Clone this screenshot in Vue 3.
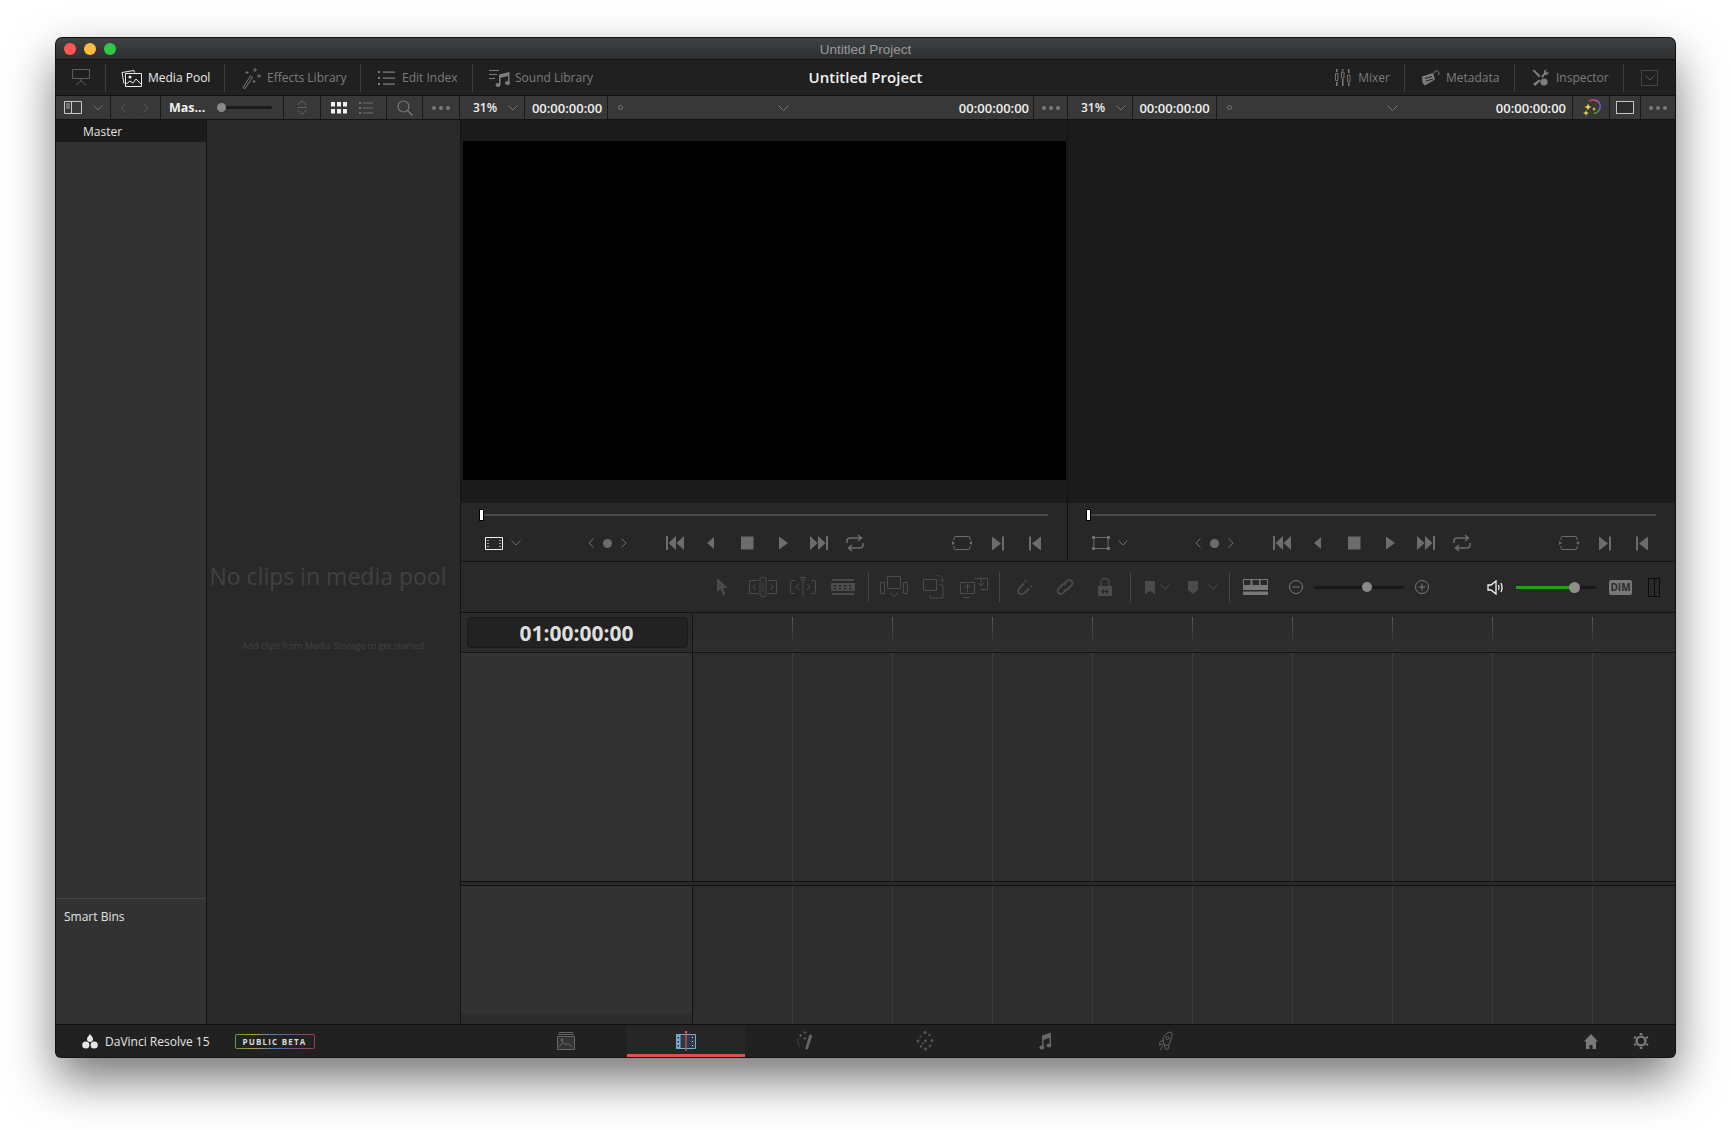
<template>
  <div class="page">
    <div class="window">
      <header class="titlebar">
        <div class="lights">
          <span class="light light--red"></span>
          <span class="light light--amber"></span>
          <span class="light light--green"></span>
        </div>
        <span class="titlebar__name">Untitled Project</span>
      </header>

      <div class="toolbar">
        <div class="toolbar__side">
          <div class="tool tool--monitor">
            <svg width="18" height="18" viewBox="0 0 18 18" fill="none" stroke="currentColor">
              <path d="M.5 .5h17v9H.5z" />
              <path d="M9 9.500v3M4 16l5-4 5 4" />
            </svg>
          </div>
          <div class="tool tool--active tool--pool">
            <svg width="21" height="18" viewBox="0 0 21 18" fill="none" stroke="currentColor">
              <path d="M3 14.500 1 3.500l12-2 .5 2" />
              <path d="M4.500 4.500h16v13h-16z" />
              <circle cx="9" cy="8" r="1.500" fill="currentColor" stroke="none" />
              <path d="M5 15l4-3 3 2 3-4 5 5" />
            </svg>
            Media Pool
          </div>
          <div class="tool tool--effects">
            <svg width="22" height="22" viewBox="0 0 22 22" fill="none" stroke="currentColor">
              <path d="M2 20.500 9.500 9l2 1.300L4 21.500z" />
              <path d="M14 1v4M12 3h4M18 7v4M16 9h4M13 13v3M11.500 14.500h3M6 4v3M4.500 5.500h3" stroke-width=".9" />
            </svg>
            Effects Library
          </div>
          <div class="tool tool--index">
            <svg width="17" height="14" viewBox="0 0 17 14" fill="currentColor">
              <path d="M0 0h2v2H0zM0 6h2v2H0zM0 12h2v2H0zM5 .5h12v1.200H5zM5 6.500h12v1.200H5zM5 12.500h12v1.200H5z" />
            </svg>
            Edit Index
          </div>
          <div class="tool tool--sound">
            <svg width="22" height="18" viewBox="0 0 22 18" fill="currentColor">
              <path d="M0 1h10v1H0zM0 5h8v1H0zM0 9h6v1H0z" />
              <path d="M10 5.500 20.500 3v11h-1.400V7L11.500 8.800V16h-1.500z" />
              <ellipse cx="9" cy="16" rx="2.500" ry="2" />
              <ellipse cx="18.500" cy="14" rx="2.500" ry="2" />
            </svg>
            Sound Library
          </div>
        </div>
        <div class="toolbar__project">Untitled Project</div>
        <div class="toolbar__side toolbar__side--right">
          <div class="tool tool--mixer">
            <svg width="16" height="17" viewBox="0 0 16 17" fill="currentColor">
              <path d="M1 0h1.500v3H1zM1 13h1.500v4H1zM7 0h1.500v1.500H7zM7 10h1.500v7H7zM13 0h1.500v4H13zM13 14h1.500v3H13z" />
              <path d="M.5 4.500h2.500v7H.5zM6.500 3h2.500v6H6.500zM12.500 6h2.500v7h-2.500z" fill="none" stroke="currentColor" stroke-width=".9" />
            </svg>
            Mixer
          </div>
          <div class="tool tool--meta">
            <svg width="19" height="16" viewBox="0 0 19 16" fill="currentColor">
              <path d="M1 6.500 12 3l2 6.500L4 15.500 1.500 13z" />
              <path d="M13 3.500c0-2 2-3.200 3.500-2.600s2.200 2.600.7 4.400" fill="none" stroke="currentColor" />
              <path d="M4 8.500l7-2M5 11l7-2" stroke="#202020" />
            </svg>
            Metadata
          </div>
          <div class="tool tool--inspector">
            <svg width="17" height="17" viewBox="0 0 17 17" fill="currentColor">
              <path d="M.5 1.500 2 .5l6.500 6.200-1.500 1.800zM7 10.500l1.500 1.500-5.500 5-2-2z" />
              <path d="M9 7.500 12 4c-.6-1.800.6-3.600 3-3.500l-1.500 2 1 1.300 2-1c.3 2.200-1.500 3.700-3.500 3L10.500 9z" />
              <circle cx="12" cy="13" r="3.600" />
            </svg>
            Inspector
          </div>
          <div class="tool tool--expand">
            <span class="expand-box">
              <svg width="10" height="6" viewBox="0 0 10 6" fill="none" stroke="currentColor"><path d="m.5 .5 4.500 4.500 4.500-4.500" /></svg>
            </span>
          </div>
        </div>
      </div>

      <div class="subbar">
        <div class="seg seg--panel">
          <svg class="is-bright" width="18" height="13" viewBox="0 0 18 13" fill="none" stroke="currentColor">
            <path d="M.5 .5h17v12H.5zM7.500 .5v12" />
            <path d="M2 3h4M2 5h4M2 7h4" stroke-width=".8" />
          </svg>
          <svg width="10" height="6" viewBox="0 0 10 6" fill="none" stroke="currentColor"><path d="m.5 .5 4.500 4.500 4.500-4.500" /></svg>
        </div>
        <div class="seg seg--nav">
          <svg width="6" height="10" viewBox="0 0 6 10" fill="none" stroke="currentColor"><path d="M5.500 .5 1 5l4.500 4.500" /></svg>
          <svg width="6" height="10" viewBox="0 0 6 10" fill="none" stroke="currentColor"><path d="M.5 .5 5 5 .5 9.500" /></svg>
        </div>
        <div class="seg seg--bin">
          <b>Mas...</b>
          <span class="mini-slider"><i></i></span>
        </div>
        <div class="seg seg--sort">
          <svg width="10" height="15" viewBox="0 0 10 15" fill="none" stroke="currentColor">
            <path d="m.5 5 4.500-4.500L9.500 5M.5 7.500h9M.5 10 5 14.500 9.500 10" />
          </svg>
        </div>
        <div class="seg seg--view">
          <svg class="is-white" width="16" height="12" viewBox="0 0 16 12" fill="currentColor">
            <path d="M0 0h4v4.500H0zM6 0h4v4.500H6zM12 0h4v4.500h-4zM0 7h4v4.500H0zM6 7h4v4.500H6zM12 7h4v4.500h-4z" />
          </svg>
          <svg width="14" height="12" viewBox="0 0 14 12" fill="currentColor">
            <path d="M0 0h2v2H0zM0 5h2v2H0zM0 10h2v2H0zM4 .5h10v1H4zM4 5.500h10v1H4zM4 10.500h10v1H4z" />
          </svg>
        </div>
        <div class="seg seg--search">
          <svg width="16" height="16" viewBox="0 0 16 16" fill="none" stroke="currentColor" stroke-width="1.200">
            <circle cx="6.500" cy="6.500" r="5.500" />
            <path d="m10.500 10.500 5 5" />
          </svg>
        </div>
        <div class="seg seg--more"><i></i><i></i><i></i></div>

        <div class="seg seg--zoom"><span>31%</span>
          <svg width="10" height="6" viewBox="0 0 10 6" fill="none" stroke="currentColor"><path d="m.5 .5 4.500 4.500 4.500-4.500" /></svg>
        </div>
        <div class="seg seg--tc seg--tc-a">00:00:00:00</div>
        <div class="seg seg--clip">
          <span class="clip-dot"></span>
          <svg class="clip-chev" width="11" height="6" viewBox="0 0 11 6" fill="none" stroke="currentColor"><path d="m.5 .5 5 5 5-5" /></svg>
          <span class="clip-tc">00:00:00:00</span>
        </div>
        <div class="seg seg--more seg--more-b"><i></i><i></i><i></i></div>

        <div class="seg seg--zoom seg--zoom-b"><span>31%</span>
          <svg width="10" height="6" viewBox="0 0 10 6" fill="none" stroke="currentColor"><path d="m.5 .5 4.500 4.500 4.500-4.500" /></svg>
        </div>
        <div class="seg seg--tc seg--tc-b">00:00:00:00</div>
        <div class="seg seg--clip seg--clip-b">
          <span class="clip-dot"></span>
          <svg class="clip-chev" width="11" height="6" viewBox="0 0 11 6" fill="none" stroke="currentColor"><path d="m.5 .5 5 5 5-5" /></svg>
          <span class="clip-tc">00:00:00:00</span>
        </div>
        <div class="seg seg--color">
          <svg width="19" height="17" viewBox="0 0 19 17" fill="none" stroke-width="1.400">
            <path d="M7 2.200A7 7 0 0 1 12 1" stroke="#d9503c" />
            <path d="M12 1a7 7 0 0 1 5 2.500" stroke="#c44bc4" />
            <path d="M17 3.500a7 7 0 0 1 .8 6" stroke="#7a5be0" />
            <path d="M17.800 9.500a7 7 0 0 1-3 4" stroke="#3f9a55" />
            <path d="M14.800 13.500a7 7 0 0 1-3 1" stroke="#5ab04a" />
            <path d="M6 4.500 7 7l2.500 1L7 9l-1 2.500L5 9 2.500 8 5 7zM12 8l.6 1.500 1.400.5-1.400.5L12 12l-.6-1.500L10 10l1.400-.5zM4 11l.8 2.200L7 14l-2.200.8L4 17l-.8-2.200L1 14l2.200-.8z" fill="#f3dc4a" stroke="none" />
          </svg>
        </div>
        <div class="seg seg--safe"><span class="safe-box"></span></div>
        <div class="seg seg--more seg--last"><i></i><i></i><i></i></div>
      </div>

      <div class="main">
        <aside class="bins">
          <div class="bins__master">Master</div>
          <div class="bins__fill"></div>
          <div class="bins__smart">Smart Bins</div>
        </aside>

        <section class="pool">
          <p class="pool__empty">No clips in media pool</p>
          <p class="pool__hint">Add clips from Media Storage to get started</p>
        </section>

        <section class="edit">
          <div class="viewers">
            <div v-for="viewer in viewers" :key="viewer.id" class="viewer">
              <div class="viewer__screen">
                <div v-if="viewer.black" class="viewer__black"></div>
              </div>
              <div class="viewer__controls">
                <div class="scrub"><span class="scrub__head"></span></div>
                <div class="transport">
                  <div class="transport__view">
                    <svg v-if="viewer.black" class="is-white" width="18" height="13" viewBox="0 0 18 13" fill="none" stroke="currentColor">
                      <path d="M.5 .5h17v12H.5z" />
                      <path d="M3 3v1M3 6v1M3 9v1M15 3v1M15 6v1M15 9v1" stroke-width="1.200" />
                    </svg>
                    <svg v-else width="18" height="14" viewBox="0 0 18 14" fill="currentColor">
                      <path d="M2 1.500h14v11H2z" fill="none" stroke="currentColor" />
                      <path d="M0 0h3v3H0zM15 0h3v3h-3zM0 11h3v3H0zM15 11h3v3h-3z" />
                    </svg>
                    <svg width="10" height="6" viewBox="0 0 10 6" fill="none" stroke="currentColor"><path d="m.5 .5 4.500 4.500 4.500-4.500" /></svg>
                  </div>
                  <div class="transport__nav">
                    <svg width="6" height="10" viewBox="0 0 6 10" fill="none" stroke="currentColor"><path d="M5.500 .5 1 5l4.500 4.500" /></svg>
                    <span class="nav-dot"></span>
                    <svg width="6" height="10" viewBox="0 0 6 10" fill="none" stroke="currentColor"><path d="M.5 .5 5 5 .5 9.500" /></svg>
                  </div>
                  <div class="transport__play">
                    <span v-for="btn in playButtons" :key="btn" class="transport__btn">
                      <svg width="20" height="16" viewBox="0 0 20 16" fill="currentColor"><path :d="btn" /></svg>
                    </span>
                    <span class="transport__btn">
                      <svg width="18" height="18" viewBox="0 0 18 18" fill="none" stroke="currentColor" stroke-width="1.500">
                        <path d="M1 9V7q0-3 3-3h11M12 1l3.500 3L12 7M17 9v2q0 3-3 3H3M6 17l-3.500-3L6 11" />
                      </svg>
                    </span>
                  </div>
                  <div class="transport__marks">
                    <span class="transport__btn">
                      <svg width="20" height="16" viewBox="0 0 20 16" fill="none" stroke="currentColor">
                        <path d="M2 5V3q0-1.500 1.500-1.500h13Q18 1.500 18 3v2M2 11v2q0 1.500 1.500 1.500h13q1.500 0 1.500-1.500v-2" />
                        <path d="M0 6l3 2-3 2zM20 6l-3 2 3 2z" fill="currentColor" stroke="none" />
                      </svg>
                    </span>
                    <span class="transport__btn">
                      <svg width="13" height="15" viewBox="0 0 13 15" fill="currentColor"><path d="M0 .5 9 7.500 0 14.500zM10 .5h2v14h-2z" /></svg>
                    </span>
                    <span class="transport__btn">
                      <svg width="13" height="15" viewBox="0 0 13 15" fill="currentColor"><path d="M13 .5 4 7.500l9 7zM1 .5h2v14H1z" /></svg>
                    </span>
                  </div>
                </div>
              </div>
            </div>
          </div>

          <div class="tl-tools">
            <div class="tl-group tl-group--first">
              <span class="tl-btn">
                <svg width="14" height="18" viewBox="0 0 14 18" fill="currentColor"><path d="M1 0v14l3.500-3 2.500 6 2.500-1-2.500-6H12z" /></svg>
              </span>
              <span class="tl-btn">
                <svg width="28" height="20" viewBox="0 0 28 20" fill="none" stroke="currentColor">
                  <path d="M9 3.500H.5v13H9M19 3.500h8.500v13H19" />
                  <rect x="11" y=".5" width="6" height="19" rx="1.500" />
                  <path d="M6.500 7 4 10l2.500 3M21.500 7 24 10l-2.500 3M14 5v10" />
                </svg>
              </span>
              <span class="tl-btn">
                <svg width="26" height="20" viewBox="0 0 26 20" fill="none" stroke="currentColor">
                  <path d="M5 3.500H2q-1.500 0-1.500 1.500v10q0 1.500 1.500 1.500h3M21 3.500h3q1.500 0 1.500 1.500v10q0 1.500-1.500 1.500h-3M13 3v17" />
                  <path d="M10.500 .5h5L13 4zM9 7l-3 3 3 3M17 7l3 3-3 3" />
                </svg>
              </span>
              <span class="tl-btn">
                <svg width="24" height="16" viewBox="0 0 24 16" fill="currentColor">
                  <path d="M1 0h22v2H1zM1 14h22v2H1z" />
                  <path fill-rule="evenodd" d="M0 4h24v8H0zm3 2v1.500h2V6zm5 0v1.500h2V6zm5 0v1.500h2V6zm5 0v1.500h2V6zM3 9v1.500h2V9zm5 0v1.500h2V9zm5 0v1.500h2V9zm5 0v1.500h2V9z" />
                </svg>
              </span>
            </div>
            <span class="tl-sep"></span>
            <div class="tl-group">
              <span class="tl-btn">
                <svg width="28" height="22" viewBox="0 0 28 22" fill="none" stroke="currentColor">
                  <path d="M7.500 .5h13v12h-13zM.5 6.500h4v11h-4zM23.500 6.500h4v11h-4zM10 17l4 3.500 4-3.500" />
                </svg>
              </span>
              <span class="tl-btn">
                <svg width="22" height="24" viewBox="0 0 22 24" fill="none" stroke="currentColor">
                  <path d="M.5 4.500h13v11H.5zM7 19.500v3.500h13v-13h-4M14 .5c4 0 5.500 2 5.500 5.500M17 4.500 19.500 7 22 4.500" />
                </svg>
              </span>
              <span class="tl-btn">
                <svg width="28" height="22" viewBox="0 0 28 22" fill="none" stroke="currentColor">
                  <path d="M.5 6.500h14v11H.5zM14.500 2.500h13v11h-7M3 21.500h7M7.500 16V9M4.500 12l3-3.500 3 3.500M21 .5v9M18 7l3 3 3-3" />
                </svg>
              </span>
            </div>
            <span class="tl-sep"></span>
            <div class="tl-group">
              <span class="tl-btn">
                <svg width="18" height="18" viewBox="0 0 18 18" fill="none" stroke="currentColor" stroke-width="1.900">
                  <path d="M8 5.500 3.500 10q-2.500 3-.5 5.200T8.500 15l4.500-4.500" />
                  <path d="M10.200 2.200 9 3.400M16.200 8 15 9.200" />
                </svg>
              </span>
              <span class="tl-btn">
                <svg width="18" height="18" viewBox="0 0 18 18" fill="none" stroke="currentColor" stroke-width="1.800">
                  <path d="M7.500 6.500 11 3q2.500-2 4.500 0t0 4.500L12 11q-2 1.500-3.500.5" />
                  <path d="M10.500 11.500 7 15q-2.500 2-4.500 0t0-4.500L6 7q2-1.500 3.500-.5" />
                </svg>
              </span>
              <span class="tl-btn">
                <svg width="16" height="19" viewBox="0 0 16 19" fill="currentColor">
                  <path d="M4 8V4.500a4 4 0 0 1 8 0V8" fill="none" stroke="currentColor" stroke-width="1.300" />
                  <path fill-rule="evenodd" d="M1 8h14v10H1zm6 3-3 2.500L7 16v-2h2v2l3-2.500L9 11v2H7z" />
                </svg>
              </span>
            </div>
            <span class="tl-sep"></span>
            <div class="tl-group tl-group--marks">
              <svg width="10" height="13" viewBox="0 0 10 13" fill="currentColor"><path d="M0 0h10v13L5 10l-5 3z" /></svg>
              <svg width="10" height="6" viewBox="0 0 10 6" fill="none" stroke="currentColor"><path d="m.5 .5 4.500 4.500 4.500-4.500" /></svg>
              <svg class="marks-gap" width="10" height="13" viewBox="0 0 10 13" fill="currentColor"><path d="M0 1q0-1 1-1h8q1 0 1 1v8l-5 4-5-4z" /></svg>
              <svg class="marks-last" width="10" height="6" viewBox="0 0 10 6" fill="none" stroke="currentColor"><path d="m.5 .5 4.500 4.500 4.500-4.500" /></svg>
            </div>
            <span class="tl-sep"></span>
            <svg class="tl-layout" width="25" height="16" viewBox="0 0 25 16" fill="currentColor">
              <path fill-rule="evenodd" d="M0 0h25v11H0zm1 1v5h6.500V1zm8.500 0v5H16V1zm8 0v5H24V1zM0 12.500h25V16H0z" />
            </svg>
            <svg class="is-mid" width="14" height="14" viewBox="0 0 14 14" fill="none" stroke="currentColor"><circle cx="7" cy="7" r="6.500" /><path d="M3.500 7h7" /></svg>
            <span class="zoom-slider"><i></i></span>
            <svg class="is-mid" width="14" height="14" viewBox="0 0 14 14" fill="none" stroke="currentColor"><circle cx="7" cy="7" r="6.500" /><path d="M3.500 7h7M7 3.500v7" /></svg>
            <svg class="tl-speaker is-white" width="17" height="15" viewBox="0 0 17 15" fill="none" stroke="currentColor" stroke-width="1.300">
              <path d="M1 5h3l5-4v13l-5-4H1z" />
              <path d="M11.500 5q1 2.500 0 5M14 3q2 4.500 0 9" />
            </svg>
            <span class="vol-slider"><i></i></span>
            <span class="dim">DIM</span>
            <span class="bars"></span>
          </div>

          <div class="timeline">
            <div class="timeline__ruler">
              <div class="timeline__head">
                <div class="tc-box">01:00:00:00</div>
              </div>
              <div class="ruler">
                <span v-for="n in 9" :key="n" class="ruler__cell"></span>
              </div>
            </div>
            <div class="track track--upper">
              <div class="track__head"></div>
              <div class="track__grid"></div>
            </div>
            <div class="track track--lower">
              <div class="track__head"></div>
              <div class="track__grid"></div>
            </div>
          </div>
        </section>
      </div>

      <footer class="footer">
        <div class="footer__brand">
          <svg width="16" height="15" viewBox="0 0 16 15" fill="currentColor">
            <path d="M8 0c2 2.500 3 3.800 3 5a3 3 0 0 1-6 0c0-1.200 1-2.500 3-5z" />
            <circle cx="3.800" cy="11" r="3.600" />
            <circle cx="12.200" cy="11" r="3.600" />
          </svg>
          <span>DaVinci Resolve 15</span>
          <span class="beta">PUBLIC BETA</span>
        </div>
        <nav class="pages">
          <span class="page-tab">
            <svg width="18" height="18" viewBox="0 0 18 18" fill="none" stroke="currentColor">
              <path d="M2 .5h14M1 2.500h16" />
              <path d="M.5 4.500h17v13H.5z" fill="#333" />
              <path d="m2 15 4-5 3 3 2-1.500 4 3.500" />
              <circle cx="5" cy="8" r="1" fill="currentColor" />
            </svg>
          </span>
          <span class="page-tab page-tab--active">
            <svg width="20" height="20" viewBox="0 0 20 20" fill="none">
              <path d="M.5 3.500h19v14H.5z" fill="#2a3a4a" stroke="#7fa8cf" />
              <path d="M.5 3.500h3.500v14H.5z" fill="#7fa8cf" stroke="#7fa8cf" />
              <path d="M1.500 6h1.500v1.500H1.500zM1.500 10h1.500v1.500H1.500zM1.500 14h1.500v1.500H1.500z" fill="#222" />
              <path d="M16 6h1v1h-1zM16 10h1v1h-1zM16 14h1v1h-1z" fill="#cde" />
              <path d="M10 0v20" stroke="#e5504a" stroke-width="1.300" />
              <path d="M8.800 0h2.400v2H8.800z" fill="#e5504a" />
            </svg>
          </span>
          <span class="page-tab">
            <svg width="18" height="20" viewBox="0 0 18 20" fill="none" stroke="currentColor">
              <path d="M14.500 3.500c1.500.5 1.800 1 1.500 2L12 17.500q-1 1.500-2 1t-.5-2L13 5q.5-1.500 1.500-1.500z" fill="currentColor" stroke="none" />
              <path d="M9 0v3M7.500 1.500h3M4.500 3v3M3 4.500h3M9 6v3M7.500 7.500h3" stroke-width=".7" />
              <path d="M2.500 7q-2 4 1.500 9" stroke="#3a3a3a" stroke-width="1.300" />
            </svg>
          </span>
          <span class="page-tab page-tab--dots">
            <svg width="18" height="20" viewBox="0 0 18 20" fill="currentColor">
              <circle cx="9" cy="1.500" r="1.500" /><circle cx="13.500" cy="4" r="1.200" /><circle cx="16" cy="9.500" r="1.500" />
              <circle cx="14" cy="15" r="1.300" /><circle cx="9.500" cy="18" r="1.600" /><circle cx="5" cy="15.500" r="1.200" />
              <circle cx="2" cy="10" r="1.500" /><circle cx="4.500" cy="5.500" r="1.100" /><circle cx="9.500" cy="10" r="1.400" /><circle cx="7" cy="12.500" r="1" />
            </svg>
          </span>
          <span class="page-tab">
            <svg width="13" height="18" viewBox="0 0 13 18" fill="currentColor">
              <path d="M3 3.500 12 .5v13h-1.500V6L4.500 8v7.500H3z" />
              <ellipse cx="2.800" cy="15.500" rx="2.500" ry="2" />
              <ellipse cx="10" cy="13.500" rx="2.500" ry="2" />
            </svg>
          </span>
          <span class="page-tab">
            <svg width="15" height="20" viewBox="0 0 15 20" fill="none" stroke="currentColor" stroke-width=".9">
              <path d="M12 1q3 0 2 4l-3 9H6L5 8q2-6 7-7z" />
              <circle cx="9.500" cy="7" r="1.500" />
              <path d="M5 9 2 11l-.5 3L5.500 13M10.500 14l.5 3-3 2-1.500-5M5 15l-3 4" />
            </svg>
          </span>
        </nav>
        <div class="footer__actions">
          <svg width="14" height="15" viewBox="0 0 14 15" fill="currentColor"><path d="M7 0 14 7.500h-2V15H8.500v-4h-3v4H2V7.500H0z" /></svg>
          <svg width="16" height="16" viewBox="0 0 16 16" fill="none" stroke="currentColor">
            <circle cx="8" cy="8" r="4.400" stroke-width="2.400" />
            <path d="M8 0v2M8 14v2M1.100 4 2.800 5M13.200 11 14.900 12M1.100 12 2.800 11M13.200 5 14.900 4" stroke-width="2.600" />
          </svg>
        </div>
      </footer>
    </div>
  </div>
</template>

<script setup>
const viewers = [
  { id: "source", black: true },
  { id: "timeline", black: false },
];

const playButtons = [
  "M1 1h2v14H1zM11 1v14L3.500 8zM19 1v14L11.500 8z",
  "M13 2v12L6 8z",
  "M4 1.500h12.500v13H4z",
  "M6 1.500v13L15 8z",
  "M1 1v14L8.500 8zM9 1v14L16.500 8zM17 1h2v14h-2z",
];
</script>

<style scoped>
.page {
  height: 1130px;
  box-sizing: border-box;
  padding: 38px 56px 0;
  font-family: "Open Sans", "Liberation Sans", sans-serif;
  overflow: hidden;
}

.window {
  width: 1619px;
  height: 1019px;
  display: flex;
  flex-direction: column;
  background: #202020;
  border-radius: 6px 6px 5px 5px;
  overflow: hidden;
  box-shadow: 0 0 0 1px #111, 0 22px 48px rgba(0, 0, 0, 0.55);
}

.titlebar {
  position: relative;
  height: 22px;
  flex-shrink: 0;
  display: flex;
  align-items: center;
  justify-content: center;
  padding-top: 2px;
  box-sizing: border-box;
  background: linear-gradient(#3f4244, #2d2f31);
  border-bottom: 1px solid #0f0f0f;
}

.lights {
  position: absolute;
  left: 8px;
  top: 5px;
  display: flex;
  gap: 8px;
}

.light {
  width: 12px;
  height: 12px;
  border-radius: 50%;
}
.light--red { background: #fc5753; }
.light--amber { background: #fdbc40; }
.light--green { background: #33c748; }

.titlebar__name {
  font-family: "Liberation Sans", sans-serif;
  font-size: 13.500px;
  color: #999;
}

.toolbar {
  height: 35px;
  flex-shrink: 0;
  display: grid;
  grid-template-columns: 1fr auto 1fr;
  align-items: center;
  background: #202020;
  border-bottom: 1px solid #101010;
  color: #7d7d7d;
  font-size: 12px;
}

.toolbar__side {
  display: flex;
  align-items: center;
}
.toolbar__side--right {
  justify-content: flex-end;
}

.toolbar__project {
  margin-top: -2px;
  font-size: 15px;
  font-weight: 600;
  color: #f2f2f2;
}

.tool {
  height: 28px;
  box-sizing: border-box;
  display: flex;
  align-items: center;
  gap: 6px;
  border-right: 1px solid #3e3e3e;
}
.tool--active { color: #ececec; font-weight: 500; }
.tool--monitor { width: 50px; padding-left: 16px; color: #5e5e5e; }
.tool--pool { width: 119px; padding-left: 15px; color: #ececec; }
.tool--effects { width: 136px; padding-left: 16px; gap: 4px; }
.tool--index { width: 112px; padding-left: 17px; gap: 7px; }
.tool--sound { padding-left: 16px; border-right: 0; gap: 4px; }
.tool--mixer { padding-right: 14px; gap: 7px; }
.tool--meta { width: 110px; padding-left: 16px; gap: 6px; }
.tool--inspector { width: 109px; padding-left: 17px; gap: 7px; }
.tool--expand { width: 51px; padding-left: 17px; border-right: 0; }

.expand-box {
  width: 17px;
  height: 16px;
  box-sizing: border-box;
  display: flex;
  align-items: center;
  justify-content: center;
  border: 1px solid #444;
  color: #555;
}

.subbar {
  height: 24px;
  flex-shrink: 0;
  display: flex;
  background: #383838;
  border-bottom: 1px solid #131313;
  box-sizing: border-box;
  color: #6e6e6e;
  font-size: 12px;
  font-weight: 600;
}

.seg {
  height: 100%;
  box-sizing: border-box;
  flex-shrink: 0;
  display: flex;
  align-items: center;
  border-right: 1px solid #191919;
}
.seg--panel { width: 55px; padding-left: 8px; gap: 11px; }
.seg--nav { width: 50px; padding-left: 9px; gap: 17px; color: #555; }
.seg--bin { width: 123px; padding-left: 8px; color: #efefef; }
.seg--bin b { font-weight: 700; font-size: 12.500px; }
.seg--sort { width: 37px; justify-content: center; color: #666; }
.seg--view { width: 66px; padding-left: 10px; gap: 12px; }
.seg--search { width: 36px; justify-content: center; color: #7a7a7a; }
.seg--more { width: 37px; justify-content: center; gap: 3px; }
.seg--more-b { width: 34px; }
.seg--more i {
  width: 4px;
  height: 4px;
  border-radius: 50%;
  background: #7a7a7a;
}
.seg--zoom {
  width: 65px;
  padding-left: 13px;
  gap: 11px;
  color: #efefef;
}
.seg--zoom svg { color: #777; }
.seg--tc {
  width: 83px;
  justify-content: center;
  color: #efefef;
  font-size: 13px;
}
.seg--tc-a { padding-left: 2px; }
.seg--clip {
  width: 426px;
  position: relative;
  padding: 0 4px 0 10px;
}
.seg--zoom-b { width: 65px; }
.seg--tc-b { width: 84px; }
.seg--clip-b { width: 356px; padding-right: 6px; }
.seg--color { width: 37px; justify-content: center; }
.seg--safe { width: 31px; justify-content: center; }
.seg--last { width: 34px; border-right: 0; }

.clip-dot {
  width: 5px;
  height: 5px;
  box-sizing: border-box;
  border: 1px solid #777;
  border-radius: 50%;
}
.clip-chev {
  margin-left: 155px;
  color: #777;
}
.clip-tc {
  margin-left: auto;
  color: #efefef;
  font-size: 13px;
}

.safe-box {
  width: 16px;
  height: 11px;
  border: 1px solid #c4c4c4;
  background: #2b2b2b;
}

.mini-slider {
  position: relative;
  width: 52px;
  height: 3px;
  margin-left: 15px;
  background: #1b1b1b;
  border-radius: 2px;
}
.mini-slider i {
  position: absolute;
  left: -3px;
  top: -3px;
  width: 9px;
  height: 9px;
  border-radius: 50%;
  background: #8a8a8a;
}

.is-bright { color: #c8c8c8; }
.is-white { color: #f2f2f2; }
.is-mid { color: #7a7a7a; }

.main {
  flex: 1;
  min-height: 0;
  display: flex;
}

.bins {
  width: 151px;
  flex-shrink: 0;
  display: flex;
  flex-direction: column;
  background: #323232;
  border-right: 1px solid #141414;
  box-sizing: border-box;
  color: #e4e4e4;
  font-size: 12px;
}
.bins__master {
  height: 22px;
  padding-left: 27px;
  line-height: 24px;
  background: #1b1b1b;
}
.bins__fill { flex: 1; }
.bins__smart {
  height: 126px;
  box-sizing: border-box;
  padding: 9px 8px 0;
  border-top: 1px solid #444;
}

.pool {
  width: 254px;
  flex-shrink: 0;
  box-sizing: border-box;
  padding-top: 440px;
  background: #292929;
  border-right: 1px solid #141414;
  text-align: center;
  overflow: hidden;
}
.pool__empty {
  margin: 0 11px 0 0;
  font-size: 23px;
  line-height: 32px;
  color: #414141;
  white-space: nowrap;
}
.pool__hint {
  margin: 47px 1px 0 0;
  font-size: 9px;
  line-height: 14px;
  color: #434343;
}

.edit {
  flex: 1;
  min-width: 0;
  display: flex;
  flex-direction: column;
}

.viewers {
  height: 442px;
  flex-shrink: 0;
  display: flex;
  border-bottom: 1px solid #121212;
  box-sizing: border-box;
}

.viewer {
  width: 607px;
  display: flex;
  flex-direction: column;
  border-right: 1px solid #121212;
  box-sizing: border-box;
}
.viewer:last-child { border-right: 0; }

.viewer__screen {
  flex: 1;
  box-sizing: border-box;
  padding: 21px 1px 0 2px;
  background: #1b1b1b;
}
.viewer__black {
  height: 339px;
  background: #000;
}

.viewer__controls {
  height: 58px;
  flex-shrink: 0;
  box-sizing: border-box;
  padding-top: 7px;
  background: #272727;
  color: #6c6c6c;
}

.scrub {
  position: relative;
  height: 2px;
  margin: 4px 19px 0 20px;
  background: #484848;
}
.scrub__head {
  position: absolute;
  left: -2px;
  top: -5px;
  width: 3px;
  height: 10px;
  background: #fff;
  border: 1px solid #000;
}

.transport {
  display: flex;
  align-items: center;
  height: 36px;
  margin-top: 9px;
  padding-left: 24px;
}
.transport__view {
  width: 97px;
  display: flex;
  align-items: center;
  gap: 8px;
}
.transport__nav {
  width: 75px;
  padding-left: 6px;
  box-sizing: border-box;
  display: flex;
  align-items: center;
  gap: 9px;
}
.nav-dot {
  width: 9px;
  height: 9px;
  border-radius: 50%;
  background: currentColor;
}
.transport__play {
  display: flex;
  width: 287px;
}
.transport__marks {
  display: flex;
}
.transport__btn {
  width: 36px;
  flex-shrink: 0;
  display: flex;
  align-items: center;
  justify-content: center;
}

.tl-tools {
  height: 51px;
  flex-shrink: 0;
  box-sizing: border-box;
  display: flex;
  align-items: center;
  padding-left: 242px;
  background: #292929;
  border-bottom: 1px solid #111;
  color: #4b4b4b;
}
.tl-group {
  display: flex;
  align-items: center;
}
.tl-btn {
  width: 40px;
  flex-shrink: 0;
  display: flex;
  align-items: center;
  justify-content: center;
}
.tl-sep {
  width: 1px;
  height: 30px;
  flex-shrink: 0;
  margin: 0 5px;
  background: #444;
}
.tl-group--marks {
  width: 88px;
  padding-left: 9px;
  box-sizing: border-box;
  gap: 5px;
}
.marks-gap { margin-left: 13px; }
.marks-last { margin-left: 5px; }
.tl-layout {
  margin-left: 8px;
  color: #787878;
}
.tl-layout + svg { margin-left: 21px; }

.zoom-slider {
  position: relative;
  width: 90px;
  height: 3px;
  margin: 0 11px;
  background: #191919;
  border-radius: 2px;
}
.zoom-slider i {
  position: absolute;
  left: 48px;
  top: -4px;
  width: 10px;
  height: 10px;
  border-radius: 50%;
  background: #8a8a8a;
}

.tl-speaker { margin-left: 58px; }

.vol-slider {
  position: relative;
  width: 80px;
  height: 3px;
  margin-left: 12px;
  background: #191919;
  border-radius: 2px;
}
.vol-slider::before {
  content: "";
  position: absolute;
  inset: 0 22px 0 0;
  background: #2b9a22;
}
.vol-slider i {
  position: absolute;
  left: 53px;
  top: -4px;
  width: 11px;
  height: 11px;
  border-radius: 50%;
  background: #8e8e8e;
}

.dim {
  width: 23px;
  height: 15px;
  margin-left: 13px;
  border-radius: 2px;
  background: #777;
  color: #2a2a2a;
  font-size: 10px;
  font-weight: 700;
  line-height: 15px;
  text-align: center;
}
.bars {
  width: 12px;
  height: 19px;
  box-sizing: border-box;
  margin-left: 16px;
  border: 1px solid #0c0c0c;
  background: linear-gradient(#0c0c0c, #0c0c0c) center / 1px 100% no-repeat;
}

.timeline {
  flex: 1;
  min-height: 0;
  display: flex;
  flex-direction: column;
}
.timeline__ruler {
  height: 40px;
  flex-shrink: 0;
  box-sizing: border-box;
  display: flex;
  border-bottom: 1px solid #141414;
}
.timeline__head {
  width: 232px;
  flex-shrink: 0;
  box-sizing: border-box;
  padding: 4px 4px 4px 6px;
  background: #2b2b2b;
  border-right: 1px solid #141414;
}
.tc-box {
  height: 100%;
  display: flex;
  align-items: center;
  justify-content: center;
  padding-right: 2px;
  background: #222;
  border: 1px solid #1a1a1a;
  border-radius: 4px;
  box-sizing: border-box;
  color: #dedede;
  font-size: 21px;
  font-weight: 700;
}
.ruler {
  flex: 1;
  display: flex;
  overflow: hidden;
  background: linear-gradient(#2a2a2a, #2e2e2e);
}
.ruler__cell {
  width: 100px;
  height: 25px;
  margin-top: 4px;
  box-sizing: border-box;
  flex-shrink: 0;
  border-right: 1px solid;
  border-image: linear-gradient(#5a5a5a, #333) 1;
}

.track {
  display: flex;
  box-sizing: border-box;
}
.track--upper {
  height: 229px;
  flex-shrink: 0;
  border-bottom: 1px solid #0f0f0f;
}
.track--lower {
  flex: 1;
  border-top: 1px solid #0f0f0f;
  margin-top: 3px;
  box-shadow: 0 -3px 0 #2a2a2a;
}
.track__head {
  width: 232px;
  flex-shrink: 0;
  box-sizing: border-box;
  background: #323232;
  border-right: 1px solid #141414;
}
.track--lower .track__head {
  background: linear-gradient(#323232, #323232) top / 100% 128px no-repeat, #2c2c2c;
}
.track__grid {
  flex: 1;
  background: linear-gradient(to right, transparent 99px, #3c3c3c 99px) 0 0 / 100px 100%, #2d2d2d;
}

.footer {
  height: 33px;
  flex-shrink: 0;
  display: flex;
  align-items: stretch;
  background: #212121;
  border-top: 1px solid #0f0f0f;
  box-sizing: border-box;
  color: #666;
}
.footer__brand {
  width: 450px;
  flex-shrink: 0;
  box-sizing: border-box;
  padding-left: 26px;
  display: flex;
  align-items: center;
  gap: 7px;
  color: #e6e6e6;
  font-size: 12px;
}
.beta {
  margin-left: 18px;
  padding: 0 7px;
  height: 15px;
  box-sizing: border-box;
  border: 1px solid transparent;
  border-radius: 2px;
  background: linear-gradient(#222, #222) padding-box, linear-gradient(90deg, #5f9a4a, #b89a3c, #3a80b8, #7f4a90, #a03a55) border-box;
  font-size: 8px;
  font-weight: 700;
  letter-spacing: 1.200px;
  line-height: 13px;
  color: #ddd;
}
.pages {
  display: flex;
}
.page-tab {
  width: 120px;
  display: flex;
  align-items: center;
  justify-content: center;
  box-sizing: border-box;
}
.page-tab--active {
  width: 118px;
  margin: 0 0 0 1px;
  background: #262626;
  border-bottom: 3px solid #e5504a;
  padding-top: 3px;
}
.page-tab--dots { color: #555; }
.footer__actions {
  margin-left: auto;
  padding-right: 26px;
  display: flex;
  align-items: center;
  gap: 35px;
  color: #7a7a7a;
}
</style>

<style>
html,
body {
  background: #fff;
}
</style>
